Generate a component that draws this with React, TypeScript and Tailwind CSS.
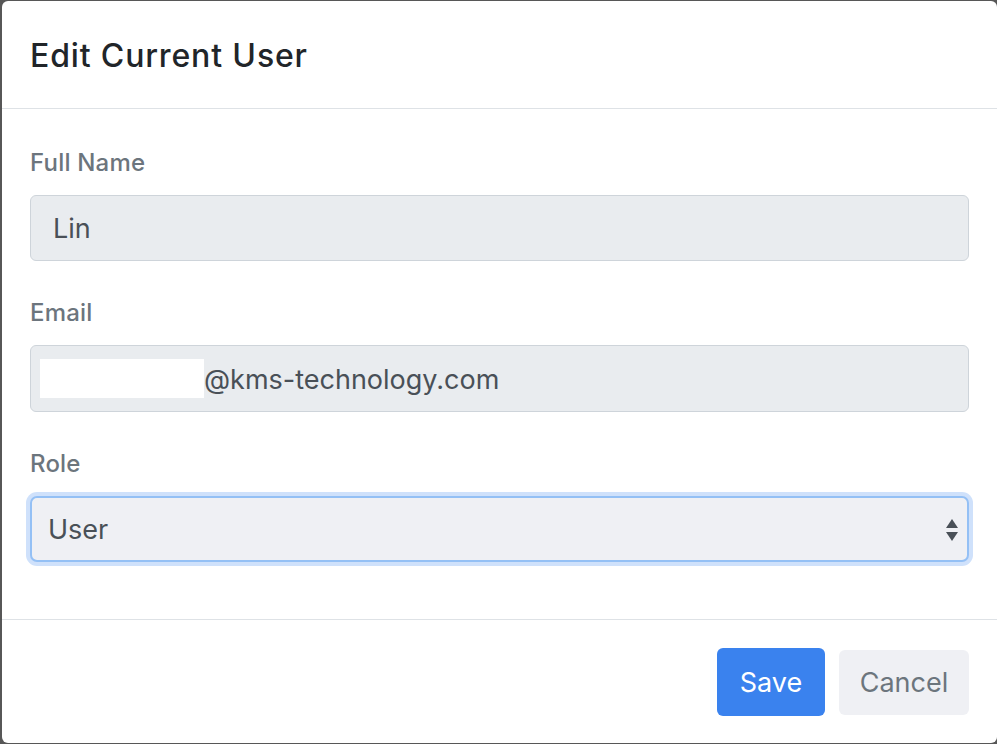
import React from "react";

export default function App() {
  return (
    <div className="h-[744px] w-[997px] overflow-hidden bg-[#575757] pl-[2px] pt-[1px] font-['Inter',sans-serif]">
      <div className="flex h-[742px] w-[995px] flex-col rounded-[6px] bg-white">
        <div className="flex h-[108px] shrink-0 items-center border-b border-[#dee2e6] pl-[28px] pt-[2px]">
          <h5 className="text-[32px] font-medium leading-none tracking-[0.85px] text-[#212529]">Edit Current User</h5>
        </div>
        <div className="flex flex-col px-[28px] pt-[36px]">
          <label className="h-[36px] text-[24px] font-medium leading-[36px] tracking-[0.2px] text-[#6c757d]">Full Name</label>
          <div className="mt-[14px] flex h-[66px] items-center rounded-[6px] border border-[#ced4da] bg-[#e9ecef] pl-[22px] pt-[3px] text-[27px] text-[#495057]">
            Lin
          </div>
          <label className="mt-[34px] h-[36px] text-[24px] font-medium leading-[36px] tracking-[0.2px] text-[#6c757d]">Email</label>
          <div className="mt-[14px] flex h-[67px] items-center rounded-[6px] border border-[#ced4da] bg-[#e9ecef] pl-[9px] text-[27px] text-[#495057]">
            <span className="inline-block h-[39px] w-[164px] bg-white" />
            <span className="pt-[3px]">@kms-technology.com</span>
          </div>
          <label className="mt-[34px] h-[36px] text-[24px] font-medium leading-[36px] tracking-[0.2px] text-[#6c757d]">Role</label>
          <div className="relative mt-[14px] flex h-[66px] items-center rounded-[7px] border-2 border-[#94c0f5] bg-[#eff0f4] pl-[16px] pt-[2px] text-[27px] text-[#495057] shadow-[0_0_0_4px_#cfe1fb]">
            User
            <svg className="absolute right-[8px] top-[20px]" width="14" height="24" viewBox="0 0 14 24">
              <path d="M7 1 L13 10 L1 10 Z" fill="#495057" />
              <path d="M1 14 L13 14 L7 23 Z" fill="#495057" />
            </svg>
          </div>
        </div>
        <div className="mt-[57px] flex h-[122px] items-start justify-end gap-[14px] border-t border-[#dee2e6] pr-[28px] pt-[28px]">
          <button className="h-[68px] w-[108px] rounded-[6px] bg-[#3a82ee] pt-[2px] text-[27px] text-white">Save</button>
          <button className="mt-[2px] h-[65px] w-[130px] rounded-[6px] bg-[#eff0f4] pt-[2px] text-[27px] text-[#6c757d]">Cancel</button>
        </div>
      </div>
    </div>
  );
}
